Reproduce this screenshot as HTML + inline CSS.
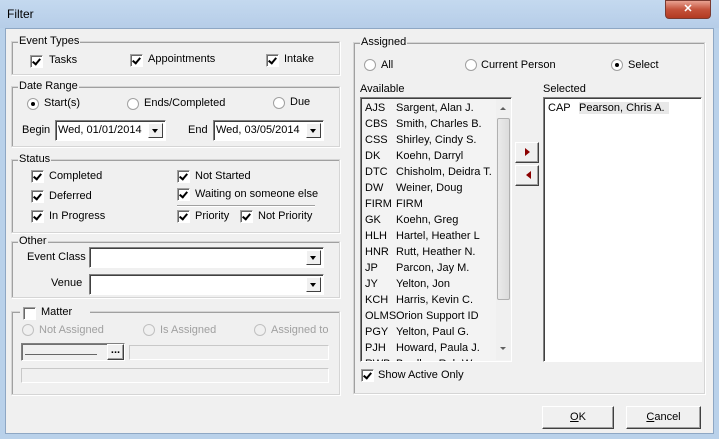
<!DOCTYPE html>
<html><head><style>
*{margin:0;padding:0;box-sizing:border-box}
body{width:719px;height:439px;overflow:hidden;background:#b9d1ea;font-family:"Liberation Sans",sans-serif;font-size:11px;color:#000;position:relative}
.a{position:absolute;white-space:nowrap}
.title{left:0;top:0;width:719px;height:28px;background:linear-gradient(#c4d9ef,#b6cde8)}
.client{left:5px;top:28px;width:709px;height:406px;background:#f0f0f0;border:1px solid #8ea7c4}
.grp{position:absolute;border:1px solid #d5d5d5;box-shadow:inset 1px 1px 0 #a0a0a0,1px 1px 0 #fff}
.lg{position:absolute;background:#f0f0f0;padding:0 1px;top:-8px;left:6px;line-height:14px}
.cb{position:absolute;width:13px;height:13px;background:#fff;border:1px solid;border-color:#a0a0a0 #fff #fff #a0a0a0;box-shadow:inset 1px 1px 0 #696969}
.cb.k::after{content:"";position:absolute;left:3px;top:1px;width:3px;height:6px;border:solid #000;border-width:0 2px 2px 0;transform:rotate(40deg)}
.rd{position:absolute;width:12px;height:12px;border-radius:50%;background:#fff;border:1px solid #a0a0a0}
.rd.on::after{content:"";position:absolute;left:3px;top:3px;width:4px;height:4px;border-radius:50%;background:#000}
.in{position:absolute;background:#fff;border:1px solid;border-color:#808080 #fff #fff #808080;box-shadow:inset 1px 1px 0 #404040}
.dd{position:absolute;width:15px;background:#f0f0f0;border:1px solid;border-color:#fff #404040 #404040 #fff;top:2px;bottom:2px;right:2px}
.dd::after{content:"";position:absolute;left:3px;top:5px;border:3.5px solid transparent;border-top:4px solid #000}
.btn{position:absolute;background:#f0f0f0;border:1px solid;border-color:#fff #404040 #404040 #fff;box-shadow:inset -1px -1px 0 #a0a0a0;text-align:center}
.g{color:#a0a0a0}
.row{position:absolute;left:4px;height:16px;line-height:16px}
.row span{display:inline-block;width:31px}
</style></head><body>
<div class="a title"></div>
<div class="a" style="left:7px;top:7px;font-size:12px">Filter</div>
<div class="a" style="left:665px;top:0;width:46px;height:19px;border-radius:0 0 4px 4px;background:linear-gradient(#e9a291,#c4523b 50%,#b23a22);border:1px solid #7a3a30;color:#fff;text-align:center;font-weight:bold;line-height:17px">✕</div>
<div class="a client"></div>

<div class="grp" style="left:11px;top:41px;width:329px;height:34px"><div class="lg">Event Types</div></div>
<div class="cb k" style="left:30px;top:55px"></div><div class="a" style="left:49px;top:54px">Tasks</div>
<div class="cb k" style="left:130px;top:54px"></div><div class="a" style="left:148px;top:53px">Appointments</div>
<div class="cb k" style="left:266px;top:54px"></div><div class="a" style="left:284px;top:53px">Intake</div>

<div class="grp" style="left:11px;top:86px;width:329px;height:61px"><div class="lg">Date Range</div></div>
<div class="rd on" style="left:27px;top:98px"></div><div class="a" style="left:44px;top:97px">Start(s)</div>
<div class="rd" style="left:127px;top:98px"></div><div class="a" style="left:144px;top:97px">Ends/Completed</div>
<div class="rd" style="left:273px;top:97px"></div><div class="a" style="left:290px;top:96px">Due</div>
<div class="a" style="left:22px;top:124px">Begin</div>
<div class="in" style="left:55px;top:120px;width:111px;height:21px"><div class="a" style="left:2px;top:3px">Wed, 01/01/2014</div><div class="dd"></div></div>
<div class="a" style="left:188px;top:124px">End</div>
<div class="in" style="left:213px;top:120px;width:111px;height:21px"><div class="a" style="left:2px;top:3px">Wed, 03/05/2014</div><div class="dd"></div></div>

<div class="grp" style="left:11px;top:159px;width:329px;height:74px"><div class="lg">Status</div></div>
<div class="cb k" style="left:31px;top:170px"></div><div class="a" style="left:49px;top:170px">Completed</div>
<div class="cb k" style="left:31px;top:190px"></div><div class="a" style="left:49px;top:190px">Deferred</div>
<div class="cb k" style="left:31px;top:210px"></div><div class="a" style="left:49px;top:210px">In Progress</div>
<div class="cb k" style="left:177px;top:170px"></div><div class="a" style="left:195px;top:170px">Not Started</div>
<div class="cb k" style="left:177px;top:188px"></div><div class="a" style="left:195px;top:188px">Waiting on someone else</div>
<div class="a" style="left:177px;top:205px;width:138px;height:2px;border-top:1px solid #a0a0a0;border-bottom:1px solid #fff"></div>
<div class="cb k" style="left:177px;top:210px"></div><div class="a" style="left:195px;top:210px">Priority</div>
<div class="cb k" style="left:240px;top:210px"></div><div class="a" style="left:258px;top:210px">Not Priority</div>

<div class="grp" style="left:11px;top:241px;width:329px;height:57px"><div class="lg">Other</div></div>
<div class="a" style="left:27px;top:251px">Event Class</div>
<div class="in" style="left:89px;top:247px;width:235px;height:21px"><div class="dd"></div></div>
<div class="a" style="left:51px;top:277px">Venue</div>
<div class="in" style="left:89px;top:274px;width:235px;height:21px"><div class="dd"></div></div>

<div class="grp" style="left:11px;top:311px;width:329px;height:84px"></div>
<div class="a" style="left:20px;top:304px;width:70px;height:14px;background:#f0f0f0"></div>
<div class="cb" style="left:23px;top:307px"></div><div class="a" style="left:41px;top:306px">Matter</div>
<div class="rd" style="left:22px;top:324px;border-color:#c0c0c0;background:#f0f0f0"></div><div class="a g" style="left:39px;top:324px">Not Assigned</div>
<div class="rd" style="left:143px;top:324px;border-color:#c0c0c0;background:#f0f0f0"></div><div class="a g" style="left:160px;top:324px">Is Assigned</div>
<div class="rd" style="left:254px;top:324px;border-color:#c0c0c0;background:#f0f0f0"></div><div class="a g" style="left:271px;top:324px">Assigned to</div>
<div class="in" style="left:21px;top:343px;width:104px;height:18px;background:#f0f0f0;box-shadow:inset 1px 1px 0 #707070"><div class="a" style="left:3px;top:10px;width:72px;border-top:1px solid #666"></div></div>
<div class="btn" style="left:107px;top:344px;width:17px;height:16px;line-height:10px;font-weight:bold">...</div>
<div class="a" style="left:129px;top:345px;width:200px;height:15px;border:1px solid;border-color:#c8c8c8 #fff #fff #c8c8c8"></div>
<div class="a" style="left:21px;top:368px;width:308px;height:15px;border:1px solid;border-color:#c8c8c8 #fff #fff #c8c8c8"></div>

<div class="grp" style="left:353px;top:42px;width:352px;height:352px"><div class="lg">Assigned</div></div>
<div class="rd" style="left:364px;top:59px"></div><div class="a" style="left:381px;top:59px">All</div>
<div class="rd" style="left:465px;top:59px"></div><div class="a" style="left:481px;top:59px">Current Person</div>
<div class="rd on" style="left:611px;top:59px"></div><div class="a" style="left:628px;top:59px">Select</div>
<div class="a" style="left:360px;top:83px">Available</div>
<div class="a" style="left:543px;top:83px">Selected</div>
<div class="in" style="left:360px;top:97px;width:152px;height:265px;background:#f3f3f3;overflow:hidden">
<div class="row" style="top:2px"><span>AJS</span>Sargent, Alan J.</div>
<div class="row" style="top:18px"><span>CBS</span>Smith, Charles B.</div>
<div class="row" style="top:34px"><span>CSS</span>Shirley, Cindy S.</div>
<div class="row" style="top:50px"><span>DK</span>Koehn, Darryl</div>
<div class="row" style="top:66px"><span>DTC</span>Chisholm, Deidra T.</div>
<div class="row" style="top:82px"><span>DW</span>Weiner, Doug</div>
<div class="row" style="top:98px"><span>FIRM</span>FIRM</div>
<div class="row" style="top:114px"><span>GK</span>Koehn, Greg</div>
<div class="row" style="top:130px"><span>HLH</span>Hartel, Heather L</div>
<div class="row" style="top:146px"><span>HNR</span>Rutt, Heather N.</div>
<div class="row" style="top:162px"><span>JP</span>Parcon, Jay M.</div>
<div class="row" style="top:178px"><span>JY</span>Yelton, Jon</div>
<div class="row" style="top:194px"><span>KCH</span>Harris, Kevin C.</div>
<div class="row" style="top:210px"><span>OLMS</span>Orion Support ID</div>
<div class="row" style="top:226px"><span>PGY</span>Yelton, Paul G.</div>
<div class="row" style="top:242px"><span>PJH</span>Howard, Paula J.</div>
<div class="row" style="top:258px"><span>RWB</span>Bradley, Rob W.</div>
<div class="a" style="left:135px;top:1px;width:15px;height:261px;background:#f0f0f0">
<div class="a" style="left:1px;top:19px;width:13px;height:182px;border:1px solid #b0b0b0;border-radius:2px;background:linear-gradient(90deg,#eaeaea,#dcdcdc)"></div>
<div class="a" style="left:4px;top:5px;border:3px solid transparent;border-bottom:3px solid #606060"></div>
<div class="a" style="left:4px;top:248px;border:3px solid transparent;border-top:3px solid #606060"></div>
</div>
</div>
<div class="btn" style="left:515px;top:142px;width:24px;height:21px"><div class="a" style="left:9px;top:5px;border:4px solid transparent;border-left:5px solid #8b0000"></div></div>
<div class="btn" style="left:515px;top:165px;width:24px;height:21px"><div class="a" style="left:6px;top:5px;border:4px solid transparent;border-right:5px solid #8b0000"></div></div>
<div class="in" style="left:543px;top:97px;width:159px;height:265px">
<div class="row" style="top:2px;left:4px"><span>CAP</span><b style="font-weight:normal;background:#e8e8e8;padding:0 4px 0 0">Pearson, Chris A.</b></div>
</div>
<div class="cb k" style="left:361px;top:369px"></div><div class="a" style="left:378px;top:369px">Show Active Only</div>
<div class="btn" style="left:542px;top:406px;width:72px;height:23px;line-height:21px"><u>O</u>K</div>
<div class="btn" style="left:626px;top:406px;width:75px;height:23px;line-height:21px"><u>C</u>ancel</div>
</body></html>
